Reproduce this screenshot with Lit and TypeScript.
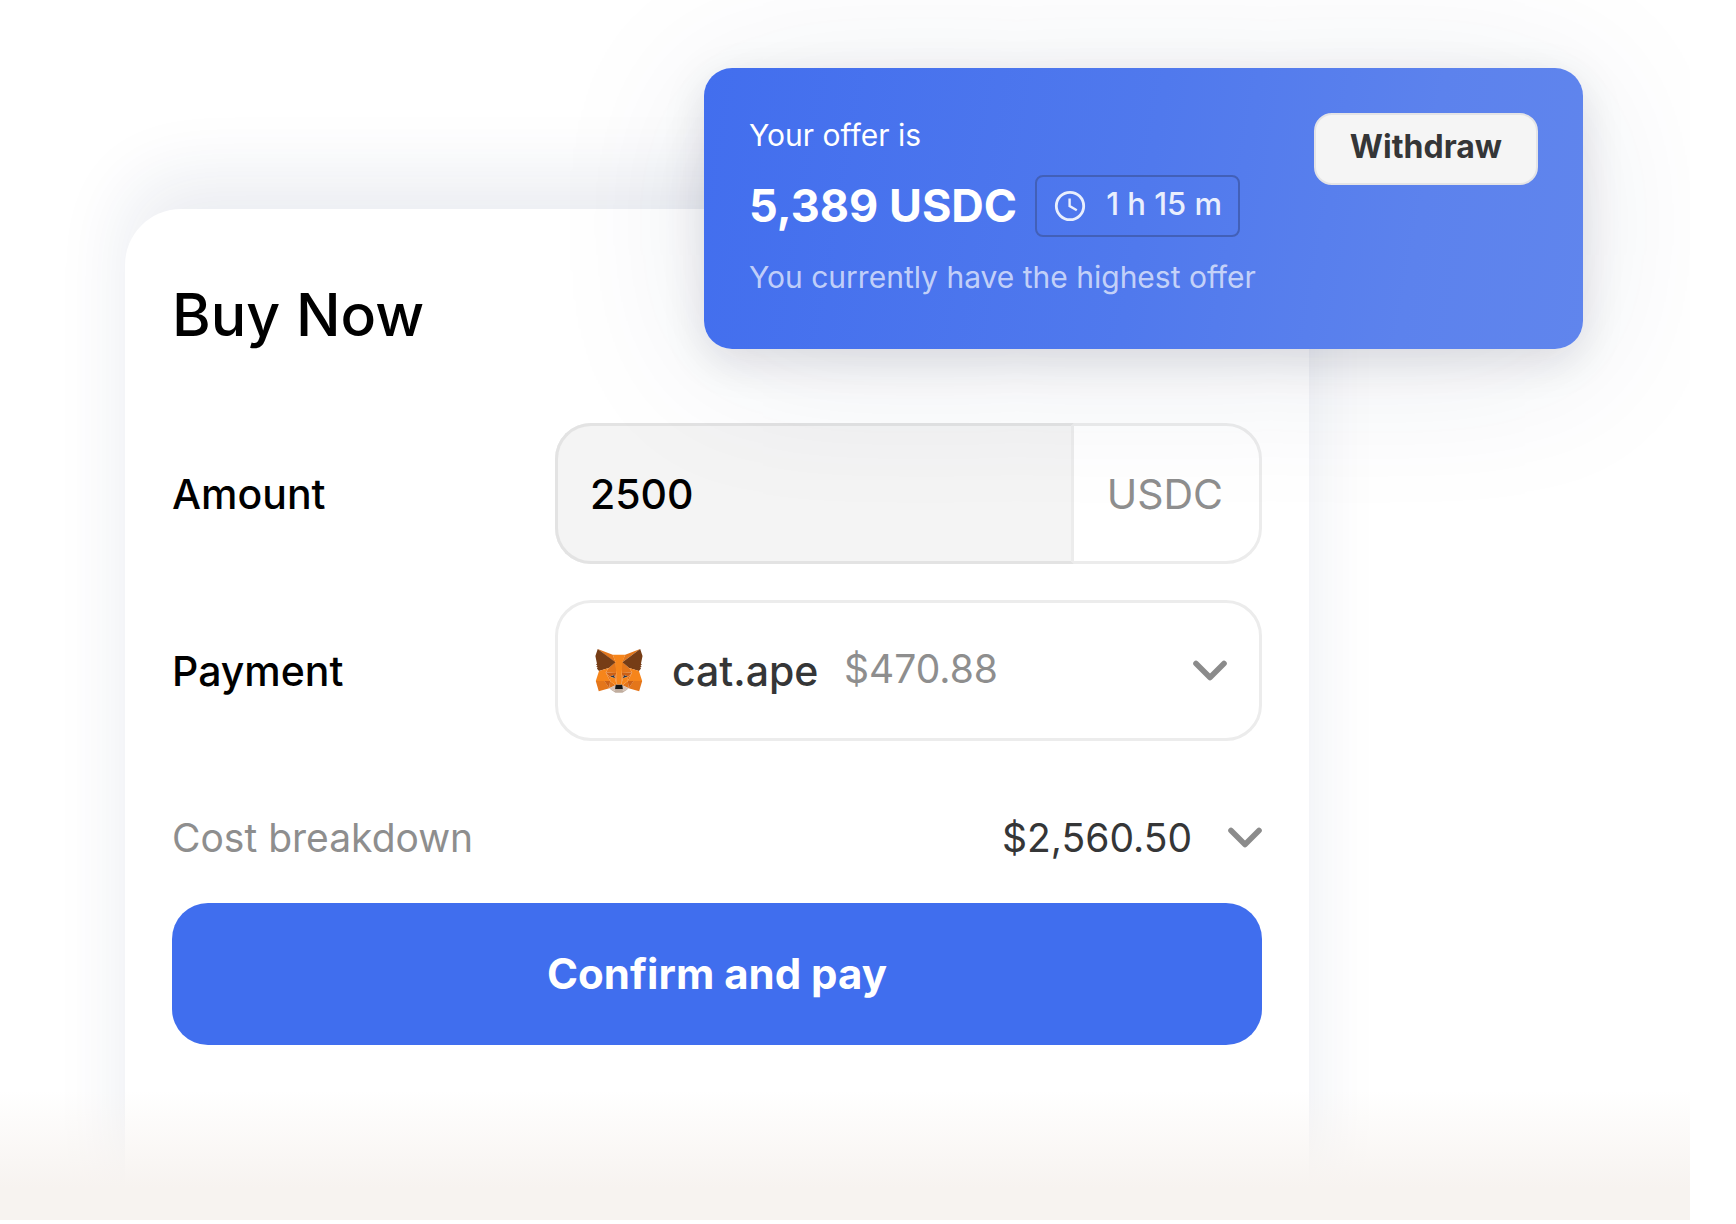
import { LitElement, html, css, svg } from "lit";
import { customElement, state } from "lit/decorators.js";

const chevron = html`<svg class="chevron" viewBox="0 0 34 22" aria-hidden="true">
  <path d="M3 3.5 17 17.5 31 3.5" fill="none" stroke="currentColor" stroke-width="5.6" stroke-linecap="round" stroke-linejoin="round" />
</svg>`;

const clock = html`<svg class="clock" viewBox="0 0 32 32" aria-hidden="true">
  <circle cx="16" cy="16" r="13.7" fill="none" stroke="currentColor" stroke-width="2.8" />
  <path d="M15.6 8.5V16l7.2 4.2" fill="none" stroke="currentColor" stroke-width="2.4" />
</svg>`;

const foxFacets: [string, string][] = [
  ["#e2761b", "M274.1 35.5l-99.5 73.9L193 65.8z"],
  ["#e4761b", "M44.4 35.5l98.7 74.6-17.5-44.3zm193.9 171.3l-26.5 40.6 56.7 15.6 16.3-55.3zm-204.4.9L50.1 263l56.7-15.6-26.5-40.6z"],
  ["#e4761b", "M103.6 138.2l-15.8 23.9 56.3 2.5-2-60.5zm111.3 0l-39-34.8-1.3 61.2 56.2-2.5zM106.8 247.4l33.8-16.5-29.2-22.8zm71.1-16.5l33.9 16.5-4.7-39.3z"],
  ["#d7c1b3", "M211.8 247.4l-33.9-16.5 2.7 22.1-.3 9.3zm-105 0l31.5 14.9-.2-9.3 2.5-22.1z"],
  ["#233447", "M138.8 193.5l-28.2-8.3 19.9-9.1zm40.9 0l8.3-17.4 20 9.1z"],
  ["#cd6116", "M106.8 247.4l4.8-40.6-31.3.9zM207 206.8l4.8 40.6 26.5-39.7zm23.8-44.7l-56.2 2.5 5.2 28.9 8.3-17.4 20 9.1zm-120.2 23.1l20-9.1 8.2 17.4 5.3-28.9-56.3-2.5z"],
  ["#e4751f", "M87.8 162.1l23.6 46-.8-22.9zm120.3 23.1l-1 22.9 23.7-46zm-64-20.6l-5.3 28.9 6.6 34.1 1.5-44.9zm30.5 0l-2.7 18 1.2 45 6.7-34.1z"],
  ["#f6851b", "M179.8 193.5l-6.7 34.1 4.8 3.3 29.2-22.8 1-22.9zm-69.2-8.3l.8 22.9 29.2 22.8 4.8-3.3-6.6-34.1z"],
  ["#c0ad9e", "M180.3 262.3l.3-9.3-2.5-2.2h-37.7l-2.3 2.2.2 9.3-31.5-14.9 11 9 22.3 15.5h38.3l22.4-15.5 11-9z"],
  ["#161616", "M177.9 230.9l-4.8-3.3h-27.7l-4.8 3.3-2.5 22.1 2.3-2.2h37.7l2.5 2.2z"],
  ["#763d16", "M278.3 114.2l8.5-40.8-12.7-37.9-96.2 71.4 37 31.3 52.3 15.3 11.6-13.5-5-3.6 8-7.3-6.2-4.8 8-6.1zM31.8 73.4l8.5 40.8-5.4 4 8 6.1-6.1 4.8 8 7.3-5 3.6 11.5 13.5 52.3-15.3 37-31.3-96.2-71.4z"],
  ["#f6851b", "M267.2 153.5l-52.3-15.3 15.9 23.9-23.7 46 31.2-.4h46.5zm-163.6-15.3l-52.3 15.3-17.4 54.2h46.4l31.1.4-23.6-46zm71 26.4l3.3-57.7 15.2-41.1h-67.5l15 41.1 3.5 57.7 1.2 18.2.1 44.8h27.7l.2-44.8z"],
];

const fox = html`<svg class="fox" viewBox="31 35 257 238" aria-hidden="true">
  ${foxFacets.map(([fill, d]) => svg`<path fill=${fill} d=${d} />`)}
</svg>`;

/** Blue card that floats over the checkout and shows the standing offer. */
@customElement("offer-card")
export class OfferCard extends LitElement {
  static styles = css`
    :host {
      display: block;
    }
    .offer {
      display: flex;
      justify-content: space-between;
      align-items: flex-start;
      padding: 45px 45px 54px;
      border-radius: 28px;
      color: #fff;
      background: linear-gradient(100deg, #426eee 0%, #5079ed 50%, #5c82ed 80%, #6085ed 100%);
      box-shadow: 0 12px 44px rgba(20, 20, 40, 0.12), 0 16px 160px rgba(30, 50, 100, 0.1);
    }
    .details {
      display: flex;
      flex-direction: column;
      gap: 22px;
      padding-top: 4px;
    }
    .text {
      margin: 0;
      font-size: 30px;
      line-height: 36px;
    }
    .muted {
      color: rgba(255, 255, 255, 0.68);
    }
    .price {
      display: flex;
      align-items: center;
      gap: 18px;
    }
    .value {
      font-size: 45px;
      line-height: 52px;
      font-weight: 700;
    }
    .timer {
      display: flex;
      align-items: flex-start;
      gap: 20px;
      padding: 13px 16px 13px 17px;
      border: 2px solid #4260b8;
      border-radius: 8px;
      font-size: 31px;
      line-height: 28px;
      font-weight: 500;
      color: #e9effd;
    }
    .clock {
      width: 32px;
      height: 32px;
    }
    .withdraw {
      padding: 14px 34px 18px;
      border: 2px solid #e4e4e6;
      border-radius: 18px;
      background: #f5f5f5;
      color: #353637;
      font-family: inherit;
      font-size: 32px;
      line-height: 36px;
      font-weight: 700;
      cursor: pointer;
    }
  `;

  render() {
    return html`<section class="offer" aria-label="Your offer">
      <div class="details">
        <p class="text">Your offer is</p>
        <div class="price">
          <strong class="value">5,389 USDC</strong>
          <span class="timer">${clock}<span>1 h 15 m</span></span>
        </div>
        <p class="text muted">You currently have the highest offer</p>
      </div>
      <button class="withdraw" type="button">Withdraw</button>
    </section>`;
  }
}

/** Checkout form: amount, wallet, cost and the confirm button. */
@customElement("buy-card")
export class BuyCard extends LitElement {
  static styles = css`
    :host {
      display: flex;
    }
    .card {
      box-sizing: border-box;
      width: 100%;
      padding: 70px 47px 80px;
      border-radius: 56px 56px 0 0;
      background: #fff;
      box-shadow: 0 -32px 72px rgba(26, 44, 100, 0.09);
    }
    .title {
      margin: 0 0 72px;
      font-size: 59px;
      line-height: 72px;
      font-weight: 500;
      color: #000;
    }
    .fields {
      display: grid;
      grid-template-columns: 383px minmax(0, 1fr);
      align-items: center;
      row-gap: 36px;
      font-size: 41px;
      line-height: 54px;
      font-weight: 500;
      color: #000;
    }
    .box {
      box-sizing: border-box;
      display: flex;
      height: 141px;
      border: 3px solid #ececec;
      border-radius: 36px;
    }
    .amount {
      flex: 1;
      min-width: 0;
      box-sizing: border-box;
      margin: -3px 0 -3px -3px;
      padding: 0 32px;
      border: 3px solid #e3e3e3;
      border-right-color: #ececec;
      border-radius: 36px 0 0 36px;
      background: #f4f4f4;
      color: #000;
      font: inherit;
    }
    .unit {
      align-self: center;
      padding: 0 36px 0 33px;
      font-weight: 400;
      color: #8e8e8e;
    }
    .payment {
      align-items: center;
      padding: 0 32px 0 37px;
    }
    .fox {
      width: 48px;
      height: 44px;
      margin-right: 29px;
    }
    .account {
      display: flex;
      flex: 1;
      align-items: flex-start;
      gap: 25px;
    }
    .wallet {
      appearance: none;
      padding: 0;
      border: 0;
      background: none;
      color: #353637;
      font: inherit;
    }
    .balance {
      font-size: 39px;
      line-height: 50px;
      font-weight: 400;
      color: #8e8e8e;
    }
    .chevron {
      width: 34px;
      height: 22px;
      color: #8b8b8b;
    }
    .cost {
      display: flex;
      align-items: center;
      width: 100%;
      margin: 71px 0 39px;
      padding: 0;
      border: 0;
      background: none;
      font-family: inherit;
      font-size: 39px;
      line-height: 52px;
      color: #8e8e8e;
      cursor: pointer;
    }
    .total {
      margin: 0 36px 0 auto;
      color: #353637;
    }
    .confirm {
      display: block;
      width: 100%;
      padding: 45px;
      border: 0;
      border-radius: 36px;
      background: #406eee;
      color: #fff;
      font-family: inherit;
      font-size: 42px;
      line-height: 52px;
      font-weight: 700;
      cursor: pointer;
    }
  `;

  @state() private open = false;

  render() {
    return html`<form class="card" @submit=${(e: Event) => e.preventDefault()}>
      <h1 class="title">Buy Now</h1>
      <div class="fields">
        <label for="amount">Amount</label>
        <div class="box">
          <input class="amount" id="amount" type="text" inputmode="decimal" value="2500" />
          <span class="unit">USDC</span>
        </div>
        <label for="payment">Payment</label>
        <div class="box payment">
          ${fox}
          <div class="account">
            <select class="wallet" id="payment">
              <option>cat.ape</option>
            </select>
            <span class="balance">$470.88</span>
          </div>
          ${chevron}
        </div>
      </div>
      <button class="cost" type="button" aria-expanded=${this.open ? "true" : "false"} @click=${() => (this.open = !this.open)}>
        <span>Cost breakdown</span>
        <span class="total">$2,560.50</span>
        ${chevron}
      </button>
      <button class="confirm" type="submit">Confirm and pay</button>
    </form>`;
  }
}

@customElement("app-root")
export class AppRoot extends LitElement {
  static styles = css`
    :host {
      display: block;
      background: #fff;
      font-family: Inter, "Liberation Sans", sans-serif;
    }
    .scene {
      position: relative;
      display: flex;
      box-sizing: border-box;
      min-height: calc(100vh - 4px);
      margin-right: 46px;
      padding: 209px 381px 0 125px;
      overflow: hidden;
    }
    .buy {
      flex: 1;
    }
    .floating {
      position: absolute;
      top: 68px;
      left: 704px;
      right: 107px;
    }
    .fade {
      position: absolute;
      inset: auto 0 0;
      height: 130px;
      background: linear-gradient(rgba(247, 243, 240, 0), #f7f3f0 75%);
      pointer-events: none;
    }
  `;

  render() {
    return html`<main class="scene">
      <buy-card class="buy"></buy-card>
      <offer-card class="floating"></offer-card>
      <div class="fade"></div>
    </main>`;
  }
}
